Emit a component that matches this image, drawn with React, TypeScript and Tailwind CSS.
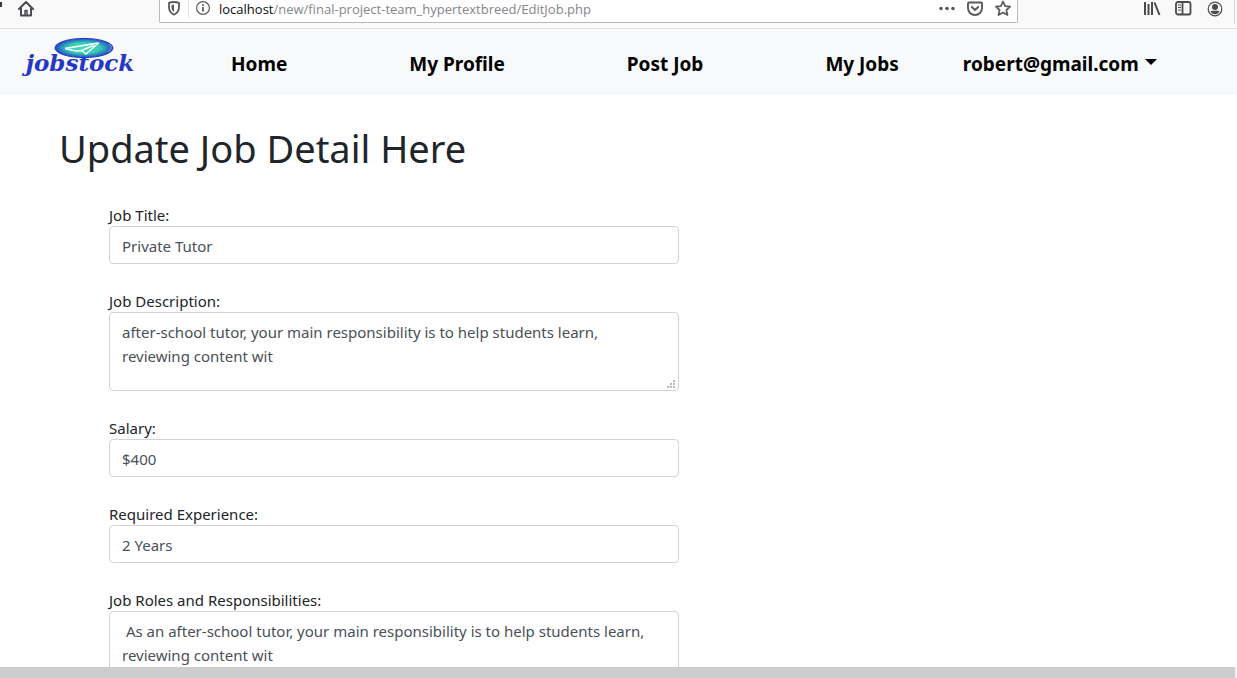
import React from "react";

const navLinks = ["Home", "My Profile", "Post Job", "My Jobs"];

const controlClass =
  "block w-full rounded border border-[#ced4da] bg-white px-3 text-[15px] leading-6 text-[#495057] outline-none";

function BrowserBar() {
  return (
    <header className="flex h-[29px] shrink-0 items-start border-b border-[#e0e0e1] bg-[#f9f9fa] text-[#555]">
      <div className="flex h-[17px] w-[159px] shrink-0 items-center">
        <span className="mb-2 h-[5px] w-[2px] bg-[#3a3a3a]" />
        <button aria-label="Home page" className="ml-4">
          <svg width="16" height="17" viewBox="0 0 16 17" fill="none" stroke="#4a4a4f" strokeWidth="2" strokeLinejoin="round" strokeLinecap="round">
            <path d="M1 9 8 2l7 7M3 8v7.5h10V8" />
            <path d="M7 15v-4.5h2V15" strokeWidth="1.5" />
          </svg>
        </button>
      </div>
      <div className="flex h-[23px] min-w-0 flex-1 items-start rounded-b-xs border border-t-0 border-[#b9b9ba] bg-white px-[6px]">
        <button aria-label="Tracking protection" className="mt-px">
          <svg width="16" height="15" viewBox="0 0 16 15" fill="none" stroke="#5a5a5e" strokeWidth="1.8" strokeLinejoin="round">
            <path d="M8 1c1.800 0 3.600.3 5 .9V6c0 3.600-1.800 6.300-5 7.700C4.800 12.300 3 9.600 3 6V1.900C4.400 1.300 6.200 1 8 1Z" />
            <path d="M8 3.600v7.400C6.200 9.800 5.500 8.200 5.500 6V4Z" fill="#5a5a5e" stroke="none" />
          </svg>
        </button>
        <span className="ml-[6px] h-[18px] w-px bg-[#e0e0e1]" />
        <button aria-label="Site information" className="mt-px ml-[7px]">
          <svg width="14" height="15" viewBox="0 0 14 15" fill="none" stroke="#5a5a5e">
            <circle cx="7" cy="7" r="6.400" strokeWidth="1.200" />
            <path d="M7 6v4.500M7 3.300v1.700" strokeWidth="1.800" />
          </svg>
        </button>
        <div className="ml-[9px] flex-1 truncate font-['Open_Sans','Noto_Sans',sans-serif] text-[13px] leading-[18px] text-[#85858a]">
          <span className="text-[#0c0c0d]">localhost</span>/new/final-project-team_hypertextbreed/EditJob.php
        </div>
        <div className="flex h-[17px] items-center gap-3">
          <button aria-label="Page actions">
            <svg width="16" height="16" viewBox="0 0 16 16" fill="#5a5a5e">
              <circle cx="2" cy="7.500" r="1.800" />
              <circle cx="8" cy="7.500" r="1.800" />
              <circle cx="14" cy="7.500" r="1.800" />
            </svg>
          </button>
          <button aria-label="Save to Pocket">
            <svg width="16" height="16" viewBox="0 0 16 16" fill="none" stroke="#5a5a5e" strokeWidth="1.900" strokeLinejoin="round" strokeLinecap="round">
              <path d="M2 1.500h12c.6 0 1 .4 1 1V7c0 4-3 7-7 7S1 11 1 7V2.500c0-.6.4-1 1-1Z" />
              <path d="M4.800 6 8 9l3.200-3" />
            </svg>
          </button>
          <button aria-label="Bookmark this page">
            <svg width="16" height="17" viewBox="0 0 16 17" fill="none" stroke="#5a5a5e" strokeWidth="1.700" strokeLinejoin="round">
              <path d="m8 1.500 2.100 4.600 5 .5-3.700 3.400 1.100 5L8 12.400 3.500 15l1.100-5L.9 6.600l5-.5Z" />
            </svg>
          </button>
        </div>
      </div>
      <div className="flex h-[17px] w-[219px] shrink-0 items-start justify-end">
        <div className="flex h-[17px] items-center gap-[14px] pr-[11px]">
          <button aria-label="Library">
            <svg width="18" height="15" viewBox="0 0 18 15" fill="none" stroke="#4a4a4f" strokeWidth="2">
              <path d="M2 1v13M5.500 3v11M9 1v13M11.500 1.500l5 12.500" />
            </svg>
          </button>
          <button aria-label="Sidebars">
            <svg width="18" height="15" viewBox="0 0 18 15" fill="none" stroke="#4a4a4f" strokeWidth="1.800">
              <rect x="1" y="1" width="14.500" height="12.500" rx="2" />
              <path d="M7.500 1v12.500" />
              <path d="M3 4h3M3 6.500h3M3 9h3" strokeWidth="1" />
            </svg>
          </button>
          <button aria-label="Account">
            <svg width="16" height="16" viewBox="0 0 16 16" fill="#4a4a4f">
              <circle cx="8" cy="8" r="6.800" fill="none" stroke="#4a4a4f" strokeWidth="1.200" />
              <circle cx="8" cy="6" r="3" />
              <path d="M3.500 10.500c1-.8 2-1 2.800-.8h3.400c.8-.2 1.800 0 2.800.8C11.600 12.300 10 13.300 8 13.300s-3.600-1-4.500-2.800Z" />
            </svg>
          </button>
        </div>
        <span className="mr-[2px] h-6 w-px bg-[#d7d7db]" />
      </div>
    </header>
  );
}

function Logo() {
  return (
    <a href="#home" aria-label="jobstock" className="block w-[136px] shrink-0">
      <svg width="136" height="54" viewBox="0 0 136 54">
        <defs>
          <radialGradient id="disc">
            <stop offset="0" stopColor="#3fe0b0" />
            <stop offset="0.55" stopColor="#38cdb4" />
            <stop offset="0.88" stopColor="#2870c0" />
            <stop offset="1" stopColor="#2438c4" />
          </radialGradient>
        </defs>
        <text x="68" y="34" textAnchor="middle" fill="#2438c4" fontSize="23" fontWeight="700" fontStyle="italic" fontFamily="'DejaVu Serif', serif">
          jobstock
        </text>
        <ellipse cx="72" cy="11" rx="29" ry="9.600" fill="url(#disc)" stroke="#2438c4" strokeWidth="1" />
        <path d="M97 7q5 4-1 8" fill="none" stroke="#8fb6ee" strokeWidth=".8" />
        <path d="M53 11.500 86.500 6 74 17l-4.500-3.500M53 11.500l11 2.500 5.500-.5 12-5" fill="none" stroke="#fff" strokeWidth="1.400" strokeLinejoin="round" />
      </svg>
    </a>
  );
}

function NavBar() {
  return (
    <nav className="flex h-[66px] shrink-0 items-center bg-[#f8f9fa] pt-1 pl-3 text-[19px] leading-[30px] font-bold text-black">
      <Logo />
      <div className="ml-[83px] flex gap-[122px]">
        {navLinks.map((label) => (
          <a key={label} href="#nav" className="whitespace-nowrap">
            {label}
          </a>
        ))}
      </div>
      <button className="ml-[64px] flex items-center gap-[6px]">
        robert@gmail.com
        <svg width="12" height="6" viewBox="0 0 12 6" className="mb-1">
          <path d="M0 0h12L6 6Z" />
        </svg>
      </button>
    </nav>
  );
}

type FieldProps = { id: string; label: string; value: string; multiline?: boolean };

function Field({ id, label, value, multiline }: FieldProps) {
  return (
    <div>
      <label htmlFor={id} className="block pt-[2px] text-[15px] leading-[22px] text-[#212529]">
        {label}
      </label>
      {multiline ? (
        <div className="relative">
          <textarea id={id} defaultValue={value} className={`${controlClass} h-[79px] resize-none py-[7px]`} />
          <svg width="8" height="8" viewBox="0 0 8 8" fill="#b8b8b8" className="absolute right-1 bottom-[3px]">
            <path d="M6 0h2v2H6zM3 3h2v2H3zM6 3h2v2H6zM0 6h2v2H0zM3 6h2v2H3zM6 6h2v2H6z" />
          </svg>
        </div>
      ) : (
        <input id={id} type="text" defaultValue={value} className={`${controlClass} h-[38px] pt-[2px]`} />
      )}
    </div>
  );
}

export default function App() {
  return (
    <div className="flex h-screen flex-col overflow-hidden bg-white font-['Noto_Sans','Open_Sans',sans-serif]">
      <BrowserBar />
      <NavBar />
      <main className="min-h-0 flex-1 overflow-hidden px-[59px] pt-[29px]">
        <h1 className="text-[38px] leading-[48px] text-[#212529]">Update Job Detail Here</h1>
        <form className="mt-[30px] ml-[50px] flex max-w-[570px] flex-col gap-6">
          <Field id="title" label="Job Title:" value="Private Tutor" />
          <Field
            id="description"
            label="Job Description:"
            value="after-school tutor, your main responsibility is to help students learn, reviewing content wit"
            multiline
          />
          <Field id="salary" label="Salary:" value="$400" />
          <Field id="experience" label="Required Experience:" value="2 Years" />
          <Field
            id="roles"
            label="Job Roles and Responsibilities:"
            value=" As an after-school tutor, your main responsibility is to help students learn, reviewing content wit"
            multiline
          />
        </form>
      </main>
      <div className="h-[11px] shrink-0 bg-[#f0f0f0] pr-[2px]">
        <div className="h-full bg-[#cdcdcd]" />
      </div>
    </div>
  );
}
